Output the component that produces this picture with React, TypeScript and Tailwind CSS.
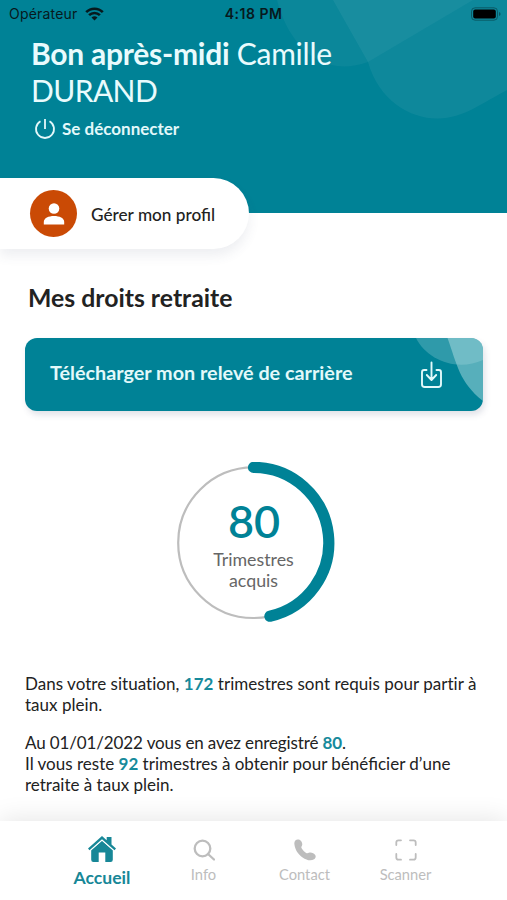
import type { ReactNode } from 'react';

function StatusBar() {
  return (
    <div className="relative flex h-[27px] items-center justify-between pl-[9px] pr-[6px] font-[Inter,sans-serif] text-[14px] leading-none text-[#07191d]">
      <div className="flex items-center gap-[6px]">
        <span className="w-[70px] tracking-[0.2px]">Opérateur</span>
        <svg width="19" height="14" viewBox="0 0 19 14" fill="none" stroke="#07191d" strokeWidth="2.6">
          <path d="M1.2 5.2a11.6 11.6 0 0 1 16.6 0M4.1 8.2a7.6 7.6 0 0 1 10.8 0" />
          <path d="M6.5 10.6a4.3 4.3 0 0 1 6 0l-3 3z" fill="#07191d" stroke="none" />
        </svg>
      </div>
      <span className="absolute left-1/2 top-[7px] -translate-x-1/2 whitespace-nowrap font-semibold tracking-[0.5px]">4:18 PM</span>
      <svg width="30" height="14" viewBox="0 0 30 14">
        <rect x=".5" y=".8" width="26" height="12.4" rx="3.6" fill="none" stroke="#07353d" strokeOpacity=".55" />
        <rect x="2.2" y="2.4" width="22.6" height="9.2" rx="2" fill="#000" />
        <path d="M28 5v4q1.6-.6 1.6-2T28 5" fill="#07353d" fillOpacity=".6" />
      </svg>
    </div>
  );
}

function Tab({ label, children }: { label: string; children: ReactNode }) {
  return (
    <div className="flex w-[101px] flex-col items-center text-[#bdbdbd]">
      <div className="flex h-[26px] items-center pt-[1px]">{children}</div>
      <span className="mt-[2px] text-[14.7px] leading-[20px]">{label}</span>
    </div>
  );
}

function Num({ children }: { children: ReactNode }) {
  return <b className="font-bold text-[#178a9b]">{children}</b>;
}

export default function App() {
  return (
    <div className="flex h-[900px] w-[507px] flex-col overflow-hidden bg-white font-[Lato,sans-serif] text-[#222]">
      <header className="relative h-[213px] shrink-0 bg-[#008296]">
        <svg className="absolute left-0 top-0" width="507" height="213" viewBox="0 0 507 213" fill="#fff">
          <path d="M277 0C287 40 318 80 368 62L473 0Z" fillOpacity=".045" />
          <path d="M333 0L368 62C379 101 411 119 438 118.500C464 118 482 103 507 90V0Z" fillOpacity=".055" />
        </svg>
        <StatusBar />
        <div className="relative pl-[31px]">
          <h1 className="mt-[8px] text-[30px] font-normal leading-[37px] tracking-[-0.25px] text-[#e9fbfd]">
            <span className="font-bold">Bon après-midi</span> Camille
            <br />
            <span className="tracking-[-0.6px]">DURAND</span>
          </h1>
          <div className="mt-[8px] flex h-[24px] items-center gap-[6px] pl-[3px] text-[#e3f8fa]">
            <svg width="22" height="22" viewBox="0 0 22 22" fill="none" stroke="currentColor" strokeWidth="1.8">
              <path d="M6.500 3.200a9 9 0 1 0 9 0M11 1v10" />
            </svg>
            <span className="text-[17px] font-bold leading-[24px]">Se déconnecter</span>
          </div>
        </div>
      </header>

      <div className="relative -mt-[35px] flex h-[71px] w-[249px] shrink-0 items-center rounded-r-full bg-white pl-[30px] shadow-[0_7px_12px_rgba(70,75,110,0.09)]">
        <div className="flex size-[47px] items-center justify-center rounded-full bg-[#ca4a05]">
          <svg width="22" height="22" viewBox="0 0 22 22" fill="#fff">
            <circle cx="11" cy="5.500" r="5.300" />
            <path d="M.8 21.500v-2.500C.8 15 5.500 13 11 13s10.200 2 10.200 6v2.500z" />
          </svg>
        </div>
        <span className="ml-[14px] pt-[2px] text-[17.2px] font-medium">Gérer mon profil</span>
      </div>

      <main className="flex shrink-0 flex-col">
        <h2 className="ml-[28px] mt-[34px] text-[24.8px] font-bold leading-[30px]">Mes droits retraite</h2>
        <button className="relative ml-[25px] mt-[25px] flex h-[73px] w-[458px] items-center justify-between overflow-hidden rounded-[12px] bg-[#008296] pl-[25px] pr-[40px] text-[#e3f9fa] shadow-[2px_4px_6px_rgba(70,75,110,0.16)]">
          <svg className="absolute right-0 top-0" width="90" height="73" viewBox="0 0 90 73" fill="#bde5e8">
            <path d="M23 0C34 22 64 34 90 22V0Z" fillOpacity=".25" />
            <path d="M54.500 0C64 26 66 44 90 63V0Z" fillOpacity=".46" />
          </svg>
          <span className="-mt-[4px] text-[19.800px] font-bold">Télécharger mon relevé de carrière</span>
          <svg className="relative" width="23" height="28" viewBox="0 0 23 28" fill="none" stroke="currentColor" strokeWidth="1.900" strokeLinecap="round" strokeLinejoin="round">
            <path d="M6.500 9H4.200Q2 9 2 11.200v12Q2 26 4.800 26h13.400q2.800 0 2.800-2.800v-12Q21 9 18.800 9h-2.300M11.500 1.500v16M6.800 14l4.700 5 4.700-5" />
          </svg>
        </button>

        <div className="relative ml-[173px] mt-[51px] flex h-[161px] w-[161px] flex-col items-center pt-[32px]">
          <svg className="absolute left-0 top-0" width="162" height="162" viewBox="0 0 162 162" fill="none">
            <circle cx="80.500" cy="80.700" r="75.300" stroke="#bdbdbd" strokeWidth="2.200" />
            <path d="M80.500 5.400A75.300 75.300 0 0 1 96.900 154.190" stroke="#008296" strokeWidth="11.200" strokeLinecap="round" />
          </svg>
          <span className="pl-[1px] text-[45px] font-semibold leading-[55px] text-[#008296]">80</span>
          <span className="text-center text-[17.800px] leading-[21px] text-[#666]">
            Trimestres
            <br />
            acquis
          </span>
        </div>

        <div className="ml-[25px] mt-[50px] whitespace-nowrap text-[17px] leading-[21px]">
          <p className="tracking-[0.03px] [font-variant-ligatures:none]">
            Dans votre situation, <Num>172</Num> trimestres sont requis pour partir à<br />
            taux plein.
          </p>
          <p className="mt-[17px]">
            <span className="tracking-[-0.12px]">
              Au 01/01/2022 vous en avez enregistré <Num>80</Num>.
            </span>
            <br />
            Il vous reste <Num>92</Num> trimestres à obtenir pour bénéficier d’une
            <br />
            retraite à taux plein.
          </p>
        </div>
      </main>

      <nav className="relative mt-auto flex h-[79px] shrink-0 bg-white pl-[51px] pt-[15px] shadow-[0_-2px_24px_rgba(0,0,0,0.1)]">
        <div className="flex w-[102px] flex-col items-center text-[#178797]">
          <svg width="28" height="26" viewBox="0 0 28 26">
            <path d="M14 4.800L3.200 14.300v9.500Q3.200 26 5.400 26h5.300v-9.500h6.600V26h5.300q2.200 0 2.200-2.200v-9.500z" fill="currentColor" />
            <path d="M.9 13.500L14 1.900l13.100 11.600M21 7V1" fill="none" stroke="#fff" strokeWidth="4.200" />
            <path d="M14 0L0 12.600l1.500 1.700L14 3.200l12.500 11.100 1.500-1.700-4.500-4V1h-4.800v3.200z" fill="currentColor" />
          </svg>
          <span className="mt-[5px] text-[17.600px] font-bold leading-[22px]">Accueil</span>
        </div>
        <Tab label="Info">
          <svg width="22" height="22" viewBox="0 0 22 22" fill="none" stroke="currentColor" strokeWidth="2.300">
            <circle cx="9.500" cy="9.500" r="7.800" />
            <path d="M15 15l6 5.500" strokeLinecap="round" />
          </svg>
        </Tab>
        <Tab label="Contact">
          <svg width="22" height="22" viewBox="0 0 22 22" fill="currentColor">
            <path d="M1.300 1.500C2.600.1 5.600.3 6.800 1.700c1.400 1.700 2 3.700 1 5.200-.8 1.200-.6 2 .3 3.200 1.100 1.600 2.400 2.800 4 3.800 1 .6 1.700.4 2.800-.1 2-.9 5.200.4 6.300 2.100 1 1.500.4 3.300-1.100 4.300-3 2-7.300 1.300-11.500-1.700C4 15.300 1 10.500.4 5.200.2 3.700.5 2.300 1.300 1.500z" />
          </svg>
        </Tab>
        <Tab label="Scanner">
          <svg width="22" height="22" viewBox="0 0 22 22" fill="none" stroke="currentColor" strokeWidth="1.800" strokeLinecap="round">
            <path d="M1.300 6V3.500Q1.300 1.300 3.500 1.300H6M15 1.300h3.500q2.200 0 2.200 2.200V6M20.700 15v3.500q0 2.200-2.200 2.200H15M6 20.700H3.500q-2.200 0-2.200-2.200V15" />
          </svg>
        </Tab>
      </nav>
    </div>
  );
}
